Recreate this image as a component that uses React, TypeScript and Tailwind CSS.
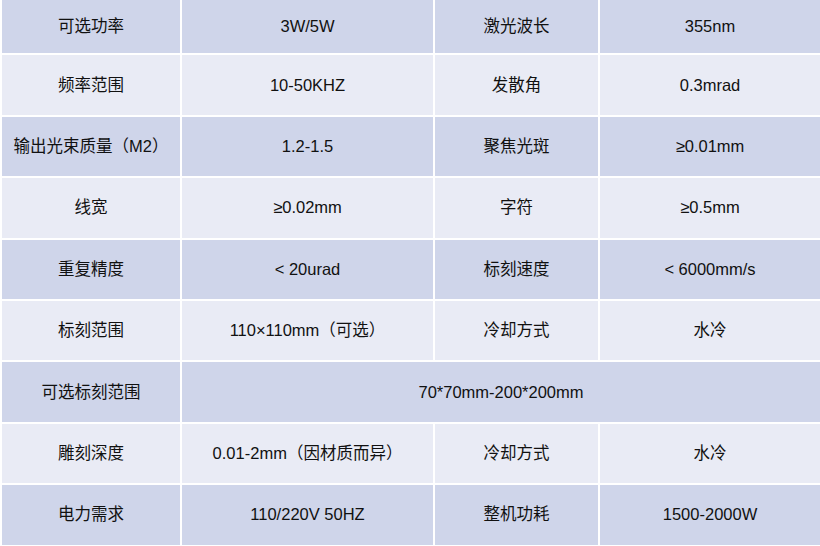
import React from "react";

type Row = { cells: string[]; span?: boolean };

const rows: Row[] = [
  { cells: ["可选功率", "3W/5W", "激光波长", "355nm"] },
  { cells: ["频率范围", "10-50KHZ", "发散角", "0.3mrad"] },
  { cells: ["输出光束质量（M2）", "1.2-1.5", "聚焦光斑", "≥0.01mm"] },
  { cells: ["线宽", "≥0.02mm", "字符", "≥0.5mm"] },
  { cells: ["重复精度", "< 20urad", "标刻速度", "< 6000mm/s"] },
  { cells: ["标刻范围", "110×110mm（可选）", "冷却方式", "水冷"] },
  { cells: ["可选标刻范围", "70*70mm-200*200mm"], span: true },
  { cells: ["雕刻深度", "0.01-2mm（因材质而异）", "冷却方式", "水冷"] },
  { cells: ["电力需求", "110/220V 50HZ", "整机功耗", "1500-2000W"] },
];

export default function App() {
  return (
    <div className="w-[820px] h-[546px] overflow-hidden bg-white">
      <div
        className="mt-[-8px] grid grid-cols-[178px_251px_163px_220px] auto-rows-[59.4px] gap-[2px] py-[2px] pl-[2px] bg-white text-[16.5px] text-[#111]"
        style={{ fontFamily: '"Liberation Sans", "Noto Sans CJK SC", Arial, sans-serif' }}
      >
        {rows.map((r, i) => {
          const bg = i % 2 === 0 ? "bg-[#cfd5ea]" : "bg-[#e9ebf5]";
          return r.cells.map((c, j) => (
            <div
              key={`${i}-${j}`}
              className={`${bg} flex items-center justify-center whitespace-nowrap ${
                r.span && j === 1 ? "col-span-3" : ""
              } ${i === 0 ? "pt-[5px]" : ""}`}
            >
              {c}
            </div>
          ));
        })}
      </div>
    </div>
  );
}
